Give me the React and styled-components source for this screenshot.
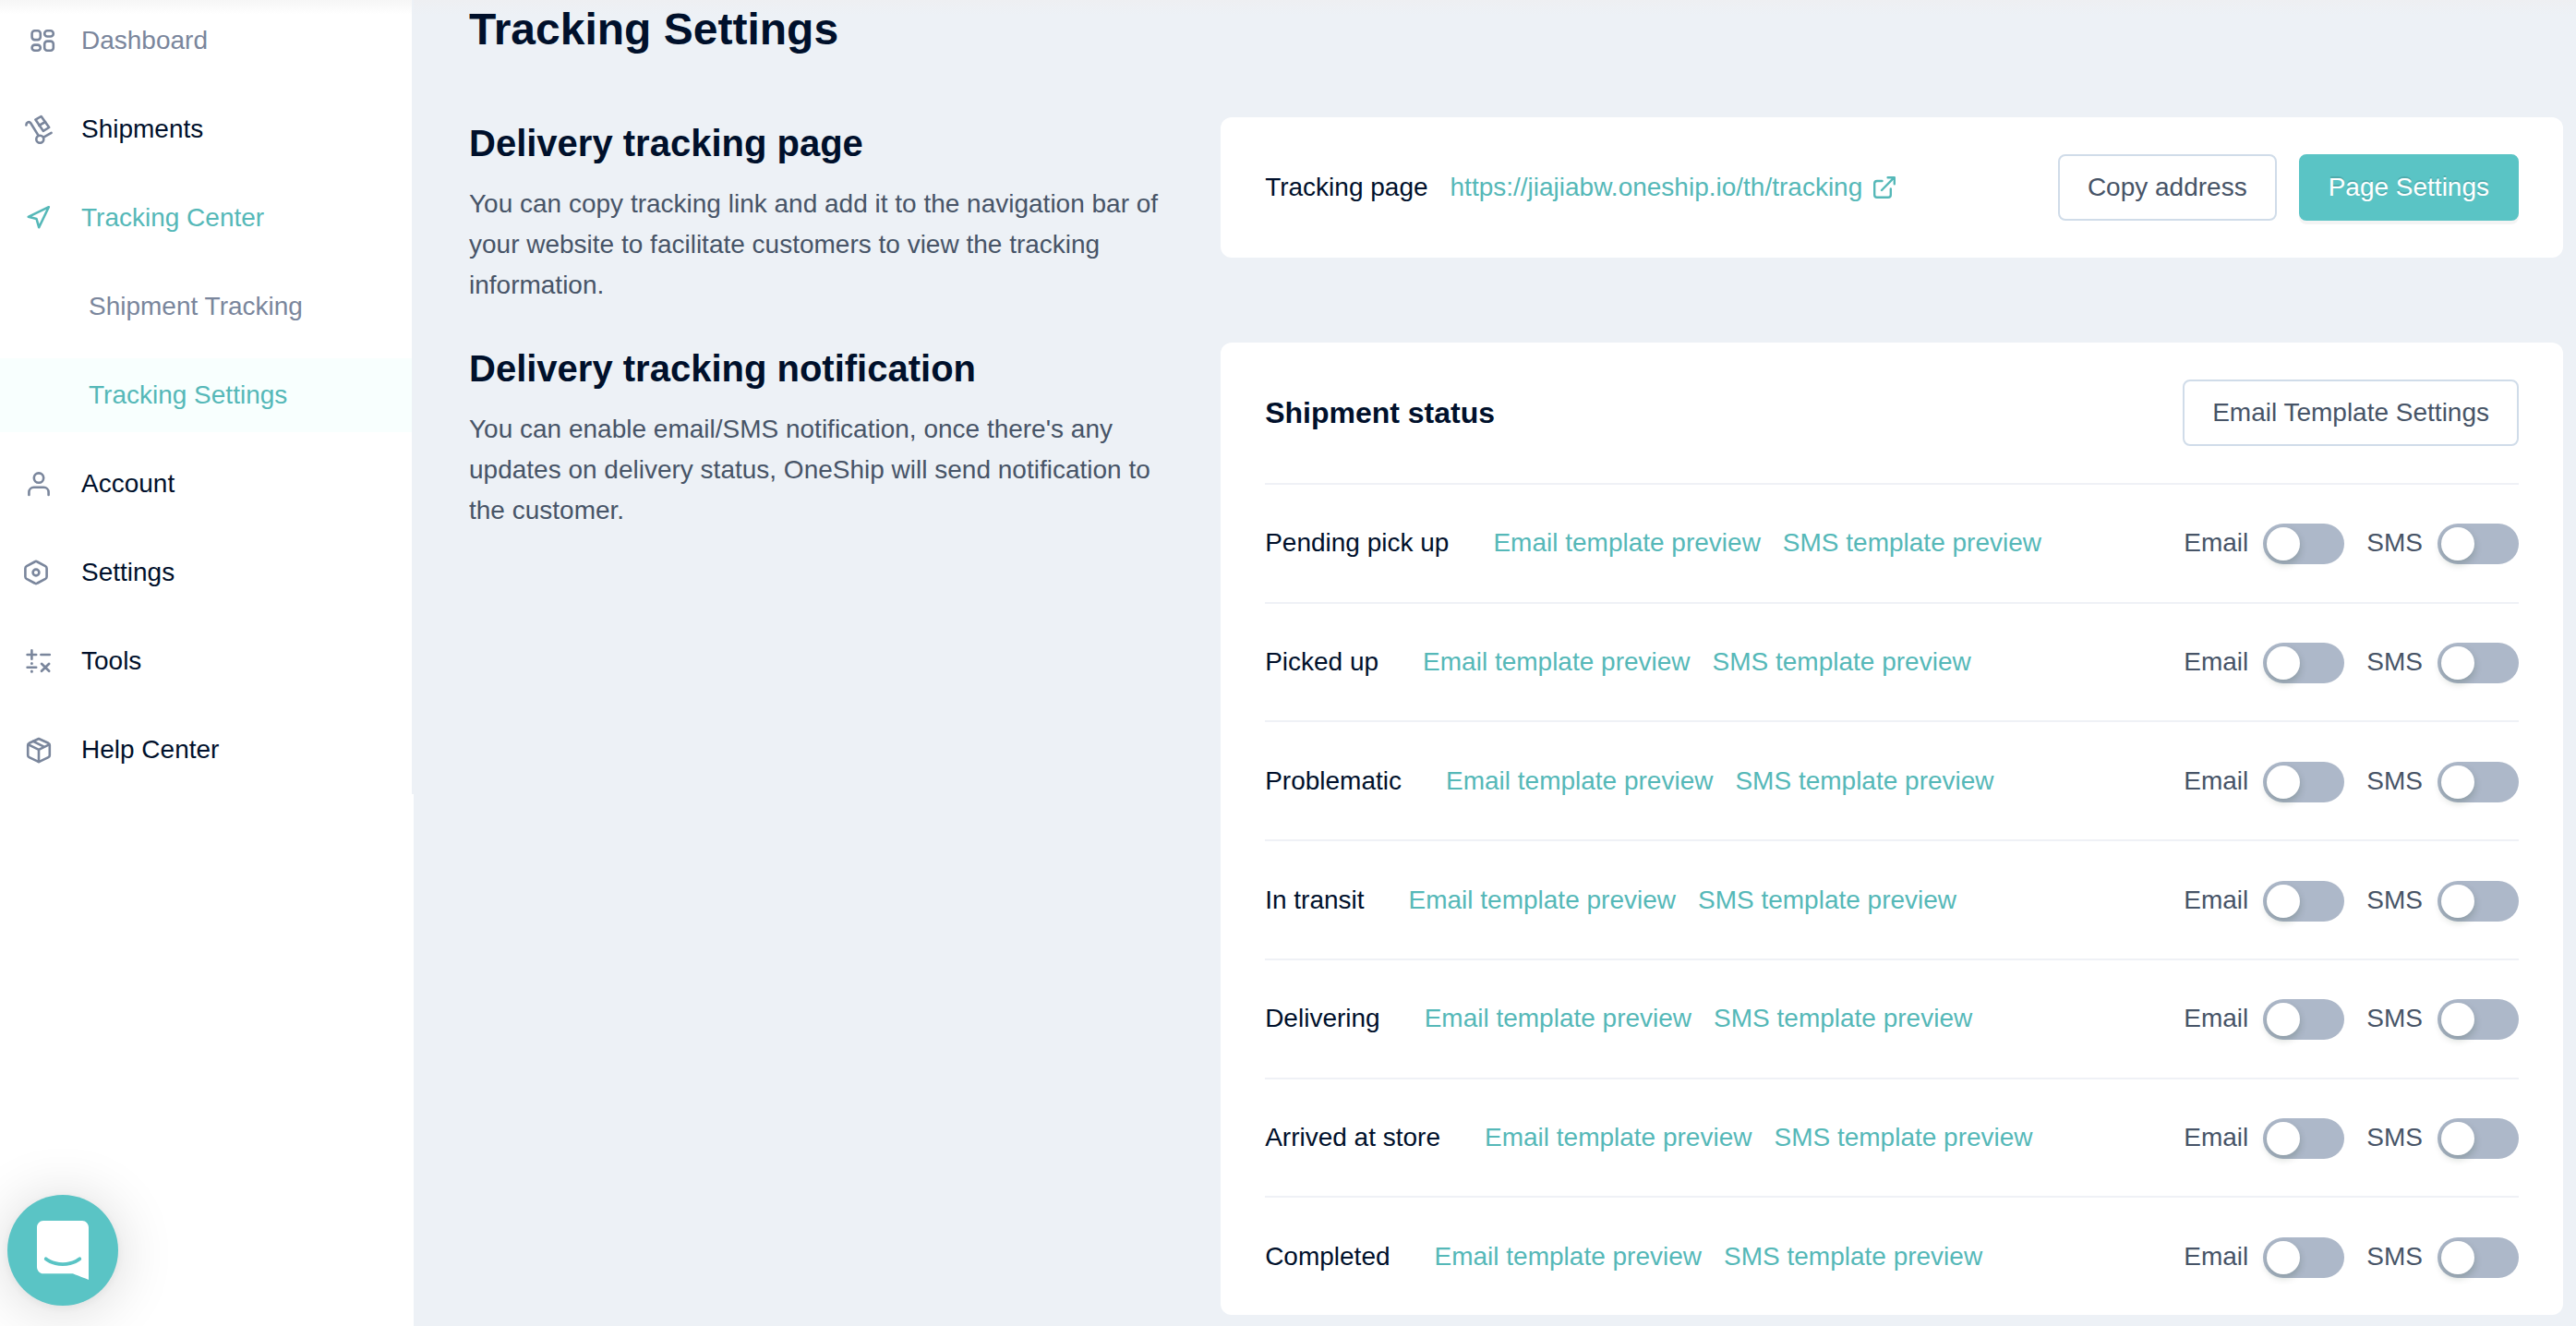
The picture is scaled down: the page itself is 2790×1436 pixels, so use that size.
import styled, { createGlobalStyle } from "styled-components";

const colors = {
    teal: "#5ac4c5",
    tealText: "#55b8b8",
    dark: "#00102b",
    slate: "#475467",
    gray: "#7a869c",
    background: "#edf1f6",
    line: "#eff1f6",
    border: "#d0dce9",
    toggle: "#adb8c9",
};

const GlobalStyle = createGlobalStyle`
    * {
        box-sizing: border-box;
    }

    body {
        margin: 0;
        background: ${colors.background};
        color: ${colors.dark};
        font-family: "Liberation Sans", Arial, sans-serif;
        font-size: 28px;
        line-height: 44px;
    }

    a {
        text-decoration: none;
    }
`;

const Layout = styled.div`
    display: flex;
    min-height: 100vh;
`;

const Sidebar = styled.aside`
    flex: 0 0 448px;
    background: linear-gradient(#f6f6f6, #ffffff 16px);
`;

const Menu = styled.nav`
    display: flex;
    flex-direction: column;
    gap: 16px;
    padding: 4px 0 8px;
    border-right: 2px solid ${colors.background};
`;

const MenuItem = styled.a`
    display: flex;
    align-items: center;
    gap: 24px;
    height: 80px;
    padding-left: ${(props) => (props.$sub ? "96px" : "24px")};
    background: ${(props) => (props.$selected ? "#f8fffe" : "transparent")};
    color: ${(props) => props.$color || colors.dark};
`;

const MenuIcon = styled.svg`
    width: 40px;
    height: 40px;
    fill: none;
    stroke: ${(props) => props.$color || colors.gray};
    stroke-width: 2.6;
    stroke-linecap: round;
    stroke-linejoin: round;
`;

const Main = styled.main`
    display: flex;
    flex: 1;
    flex-direction: column;
    min-width: 0;
    padding: 0 14px 12px 60px;
    background: linear-gradient(#eeeff2, ${colors.background} 16px);
`;

const PageTitle = styled.h1`
    margin: 0 0 63px;
    font-size: 48px;
    line-height: 64px;
`;

const Sections = styled.div`
    display: flex;
    flex: 1;
    flex-direction: column;
    gap: 40px;
`;

const Section = styled.section`
    display: grid;
    flex: ${(props) => (props.$grow ? "1" : "none")};
    grid-template-columns: 14fr 25fr;
    align-items: ${(props) => (props.$grow ? "stretch" : "start")};
`;

const Intro = styled.div`
    padding-right: 48px;
    color: ${colors.slate};

    h2 {
        margin: 0 0 16px;
        color: ${colors.dark};
        font-size: 40px;
        line-height: 56px;
    }

    p {
        margin: 0;
    }
`;

const Card = styled.div`
    display: flex;
    flex-direction: column;
    padding: 0 48px;
    border-radius: 12px;
    background: #ffffff;
`;

const CardHeader = styled.div`
    display: flex;
    align-items: center;
    gap: 24px;
    padding: 40px 0;

    h3 {
        margin: 0;
        font-size: 32px;
    }
`;

const Actions = styled.div`
    display: flex;
    gap: 24px;
    margin-left: auto;
`;

const Button = styled.button`
    height: 72px;
    padding: 0 30px;
    border: 2px solid ${(props) => (props.$primary ? colors.teal : colors.border)};
    border-radius: 8px;
    background: ${(props) => (props.$primary ? colors.teal : "#ffffff")};
    color: ${(props) => (props.$primary ? "#ffffff" : colors.slate)};
    font: inherit;
    box-shadow: ${(props) => (props.$primary ? "0 4px 0 rgba(0, 0, 0, 0.043)" : "none")};
    text-shadow: ${(props) => (props.$primary ? "0 -2px 0 rgba(0, 0, 0, 0.12)" : "none")};
    cursor: pointer;
`;

const TextLink = styled.a`
    display: flex;
    align-items: center;
    gap: 12px;
    color: ${colors.tealText};
`;

const LinkIcon = styled.svg`
    width: 24px;
    height: 24px;
    fill: none;
    stroke: currentColor;
    stroke-width: 2.4;
    stroke-linecap: round;
    stroke-linejoin: round;
`;

const StatusList = styled.ul`
    display: flex;
    flex: 1;
    flex-direction: column;
    margin: 0;
    padding: 0;
    list-style: none;
`;

const StatusRow = styled.li`
    display: flex;
    flex: 1 0 auto;
    align-items: center;
    min-height: 128px;
    border-top: 2px solid ${colors.line};
`;

const TemplateLinks = styled.div`
    display: flex;
    gap: 24px;
    margin-left: 48px;
`;

const Toggles = styled.div`
    display: flex;
    gap: 24px;
    margin-left: auto;
`;

const ToggleLabel = styled.label`
    display: flex;
    align-items: center;
    gap: 16px;
    color: ${colors.slate};
`;

const Switch = styled.input`
    appearance: none;
    display: flex;
    width: 88px;
    height: 44px;
    margin: 2px 0 0;
    padding: 4px;
    border-radius: 22px;
    background: ${colors.toggle};
    cursor: pointer;

    &::before {
        content: "";
        width: 36px;
        height: 36px;
        border-radius: 50%;
        background: #ffffff;
        box-shadow: 0 4px 8px rgba(0, 35, 11, 0.2);
    }

    &:checked {
        justify-content: flex-end;
        background: ${colors.teal};
    }
`;

const Launcher = styled.button`
    position: fixed;
    left: 8px;
    bottom: 22px;
    display: flex;
    align-items: center;
    justify-content: center;
    width: 120px;
    height: 120px;
    padding: 0;
    border: none;
    border-radius: 50%;
    background: ${colors.teal};
    box-shadow: 0 2px 12px rgba(0, 0, 0, 0.06), 0 4px 64px rgba(0, 0, 0, 0.16);
    cursor: pointer;
`;

const icons = {
    dashboard: (
        <>
            <rect x="10.6" y="9.3" width="9.2" height="9.8" rx="3" />
            <rect x="24.2" y="9.3" width="9.6" height="6.2" rx="3.1" />
            <rect x="10.6" y="24.6" width="9.2" height="6.2" rx="3.1" />
            <rect x="24.2" y="20.6" width="9.6" height="10.2" rx="3" />
        </>
    ),
    shipments: (
        <>
            <path d="M4.4 15.4C4.4 12.4 7.5 11 9.2 13.3L17.5 26.6" />
            <circle cx="19.3" cy="30.7" r="4" />
            <path d="M23.2 28.6L31.6 23.8" />
            <path d="M14.4 9.6L20.6 6L29.2 18L22.8 21.8Z" />
            <path d="M18.4 15.8L25 12" />
        </>
    ),
    tracking: <path d="M28.8 8.2L6.7 18.8L15.5 21L18.2 30.2Z" />,
    account: (
        <>
            <circle cx="18" cy="13.6" r="5.2" />
            <path d="M7.4 32V29A5.2 5.2 0 0 1 12.6 23.8H23.4A5.2 5.2 0 0 1 28.6 29V32" />
        </>
    ),
    settings: (
        <>
            <path d="M13.5 8.5Q15 7.4 16.5 8.5L25.2 13.2Q26.6 14 26.6 15.5V24.5Q26.6 26 25.2 26.8L16.5 31.5Q15 32.6 13.5 31.5L4.8 26.8Q3.4 26 3.4 24.5V15.5Q3.4 14 4.8 13.2Z" />
            <circle cx="15" cy="20" r="3.4" />
        </>
    ),
    tools: (
        <>
            <path d="M5.6 13H15.2M10.4 8.2V17.8M20.4 13H29.8" />
            <path d="M5.6 26.8H15.2M21 22.8L29.2 30.8M29.2 22.8L21 30.8" />
            <path d="M10.4 22.4V22.6M10.4 31V31.2" strokeWidth="3" />
        </>
    ),
    help: (
        <>
            <path d="M18 8L28.4 12.8Q29.8 13.5 29.8 15V26Q29.8 27.5 28.4 28.2L18 33.2L7.6 28.2Q6.2 27.5 6.2 26V15Q6.2 13.5 7.6 12.8Z" />
            <path d="M6.8 14.4L18 19.8L29.2 14.4M18 19.8V33M12 10.8L23.6 16.6" />
        </>
    ),
};

const menu = [
    { label: "Dashboard", icon: "dashboard", color: colors.gray },
    { label: "Shipments", icon: "shipments" },
    {
        label: "Tracking Center",
        icon: "tracking",
        color: colors.tealText,
        iconColor: colors.tealText,
    },
    { label: "Shipment Tracking", sub: true, color: colors.gray },
    {
        label: "Tracking Settings",
        sub: true,
        selected: true,
        color: colors.tealText,
    },
    { label: "Account", icon: "account" },
    { label: "Settings", icon: "settings" },
    { label: "Tools", icon: "tools" },
    { label: "Help Center", icon: "help" },
];

const statuses = [
    "Pending pick up",
    "Picked up",
    "Problematic",
    "In transit",
    "Delivering",
    "Arrived at store",
    "Completed",
];

function SideMenu() {
    return (
        <Sidebar>
            <Menu>
                {menu.map((item) => (
                    <MenuItem
                        key={item.label}
                        href="#"
                        $sub={item.sub}
                        $selected={item.selected}
                        $color={item.color}
                    >
                        {item.icon && (
                            <MenuIcon
                                viewBox="0 0 40 40"
                                aria-hidden="true"
                                $color={item.iconColor}
                            >
                                {icons[item.icon]}
                            </MenuIcon>
                        )}
                        {item.label}
                    </MenuItem>
                ))}
            </Menu>
        </Sidebar>
    );
}

function Status({ name }) {
    return (
        <StatusRow>
            <span>{name}</span>
            <TemplateLinks>
                <TextLink href="#">Email template preview</TextLink>
                <TextLink href="#">SMS template preview</TextLink>
            </TemplateLinks>
            <Toggles>
                <ToggleLabel>
                    Email
                    <Switch type="checkbox" role="switch" />
                </ToggleLabel>
                <ToggleLabel>
                    SMS
                    <Switch type="checkbox" role="switch" />
                </ToggleLabel>
            </Toggles>
        </StatusRow>
    );
}

function App() {
    return (
        <Layout>
            <GlobalStyle />
            <SideMenu />

            <Main>
                <PageTitle>Tracking Settings</PageTitle>
                <Sections>
                    <Section>
                        <Intro>
                            <h2>Delivery tracking page</h2>
                            <p>
                                You can copy tracking link and add it to the
                                navigation bar of your website to facilitate
                                customers to view the tracking information.
                            </p>
                        </Intro>
                        <Card>
                            <CardHeader>
                                <span>Tracking page</span>
                                <TextLink href="#">
                                    https://jiajiabw.oneship.io/th/tracking
                                    <LinkIcon viewBox="0 0 24 24" aria-hidden="true">
                                        <path d="M9.5 5H4A2.8 2.8 0 0 0 1.2 7.8V20A2.8 2.8 0 0 0 4 22.8H16A2.8 2.8 0 0 0 18.8 20V13.5" />
                                        <path d="M9 15L22.4 1.4M15.6 1.2H22.8V8.2" />
                                    </LinkIcon>
                                </TextLink>
                                <Actions>
                                    <Button type="button">Copy address</Button>
                                    <Button type="button" $primary>
                                        Page Settings
                                    </Button>
                                </Actions>
                            </CardHeader>
                        </Card>
                    </Section>

                    <Section $grow>
                        <Intro>
                            <h2>Delivery tracking notification</h2>
                            <p>
                                You can enable email/SMS notification, once
                                there's any updates on delivery status, OneShip
                                will send notification to the customer.
                            </p>
                        </Intro>
                        <Card>
                            <CardHeader>
                                <h3>Shipment status</h3>
                                <Actions>
                                    <Button type="button">
                                        Email Template Settings
                                    </Button>
                                </Actions>
                            </CardHeader>
                            <StatusList>
                                {statuses.map((name) => (
                                    <Status key={name} name={name} />
                                ))}
                            </StatusList>
                        </Card>
                    </Section>
                </Sections>
            </Main>

            <Launcher type="button" aria-label="Open chat">
                <svg width="56" height="64" viewBox="0 0 28 32" fill="#ffffff" aria-hidden="true">
                    <path d="M28 32s-4.714-1.855-8.527-3.34H3.437C1.54 28.66 0 27.026 0 25.013V3.644C0 1.633 1.54 0 3.437 0h21.125c1.898 0 3.437 1.632 3.437 3.645v18.404H28V32zm-4.139-11.982a.88.88 0 00-1.292-.105c-.03.026-3.015 2.681-8.57 2.681-5.486 0-8.517-2.636-8.571-2.684a.88.88 0 00-1.29.107 1.01 1.01 0 00-.219.708.992.992 0 00.318.664c.142.128 3.537 3.15 9.762 3.15 6.226 0 9.621-3.022 9.763-3.15a.992.992 0 00.317-.664 1.01 1.01 0 00-.218-.707z" />
                </svg>
            </Launcher>
        </Layout>
    );
}

export default App;
